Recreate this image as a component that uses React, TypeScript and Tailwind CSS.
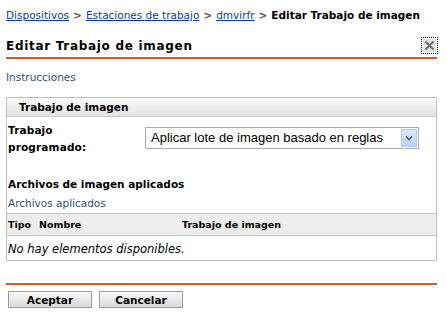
import React from "react";

const font = { fontFamily: '"DejaVu Sans", Verdana, sans-serif' };

export default function App() {
  return (
    <div className="w-[447px] h-[316px] bg-white overflow-hidden text-black" style={font}>
      <div className="ml-[6px] w-[431px]">
        {/* breadcrumb */}
        <div className="pt-[8px] h-[22px] text-[10.5px] leading-[14px] whitespace-nowrap flex items-center">
          <span className="text-[#0a3c9e] underline">Dispositivos</span>
          <span className="mx-[4px] text-[#555] font-bold">&gt;</span>
          <span className="text-[#0a3c9e] underline">Estaciones de trabajo</span>
          <span className="mx-[4px] text-[#555] font-bold">&gt;</span>
          <span className="text-[#0a3c9e] underline">dmvirfr</span>
          <span className="mx-[4px] text-[#555] font-bold">&gt;</span>
          <span className="font-bold">Editar Trabajo de imagen</span>
        </div>

        {/* title row */}
        <div className="mt-[14px] h-[20px] flex justify-between">
          <div className="text-[12px] leading-[20px] font-bold tracking-[0.7px]">Editar Trabajo de imagen</div>
          <div className="mt-[1px] mr-[-1px] w-[17px] h-[17px] border border-dotted border-black p-[1px]">
            <div className="w-full h-full bg-[#e2e2e2] flex items-center justify-center">
              <svg width="11" height="11" viewBox="0 0 11 11">
                <path d="M1.5 1.5 L9.5 9.5 M9.5 1.5 L1.5 9.5" stroke="#6e6e6e" strokeWidth="2" />
              </svg>
            </div>
          </div>
        </div>
        <div className="mt-[1px] h-[2px] bg-[#d8561f]" />

        {/* instructions */}
        <div className="mt-[11px] h-[14px] text-[10.5px] leading-[14px] text-[#2f4f6f]">Instrucciones</div>

        {/* box */}
        <div className="mt-[13px] border border-[#c0c0c0]">
          <div className="h-[19px] border-b border-[#c8c8c8] bg-gradient-to-b from-[#fafafa] to-[#e2e2e2] pl-[12px] text-[10.5px] font-bold leading-[18px]">
            Trabajo de imagen
          </div>
          <div className="pt-[5px] pl-[1px] flex items-start">
            <div className="w-[137px] text-[10.5px] font-bold leading-[17px] tracking-[0.15px]">
              Trabajo
              <br />
              programado:
            </div>
            <div
              className="mt-[5px] w-[274px] h-[22px] border border-[#a5acb2] bg-white flex items-center justify-between pl-[5px] pr-[1px]"
              style={{ fontFamily: '"Liberation Sans", Arial, sans-serif' }}
            >
              <span className="text-[13px] leading-[16px] whitespace-nowrap">Aplicar lote de imagen basado en reglas</span>
              <div className="w-[16px] h-[18px] border border-[#b3c6ec] bg-gradient-to-b from-[#dfe8fb] to-[#bccff5] flex items-center justify-center">
                <svg width="8" height="6" viewBox="0 0 8 6">
                  <path d="M1 1.5 L4 4.5 L7 1.5" stroke="#4d5f80" strokeWidth="1.6" fill="none" />
                </svg>
              </div>
            </div>
          </div>

          <div className="mt-[21px] pl-[1px] h-[14px] text-[10.5px] font-bold leading-[14px]">Archivos de imagen aplicados</div>
          <div className="mt-[5px] pl-[1px] h-[14px] text-[10.5px] leading-[14px] text-[#2f4f6f]">Archivos aplicados</div>

          <div className="mt-[3px] border-t border-b border-[#c6c6c6] bg-[#ececea] h-[23px] flex items-center pl-[1px] text-[9.5px] font-bold leading-[14px]">
            <div className="w-[31px]">Tipo</div>
            <div className="w-[143px]">Nombre</div>
            <div>Trabajo de imagen</div>
          </div>
          <div className="h-[24px] pl-[1px] pt-[1px] flex items-center text-[11.5px] italic leading-[14px]">
            No hay elementos disponibles.
          </div>
        </div>

        <div className="mt-[22px] h-[2px] bg-[#d8561f]" />

        <div className="mt-[6px] ml-[2px] flex gap-[7px]">
          <div className="w-[84px] h-[17px] border border-[#9c9c9c] bg-gradient-to-b from-[#f8f8f8] to-[#dadada] flex items-center justify-center text-[10.5px] font-bold leading-[14px]">
            Aceptar
          </div>
          <div className="w-[84px] h-[17px] border border-[#9c9c9c] bg-gradient-to-b from-[#f8f8f8] to-[#dadada] flex items-center justify-center text-[10.5px] font-bold leading-[14px]">
            Cancelar
          </div>
        </div>
      </div>
    </div>
  );
}
